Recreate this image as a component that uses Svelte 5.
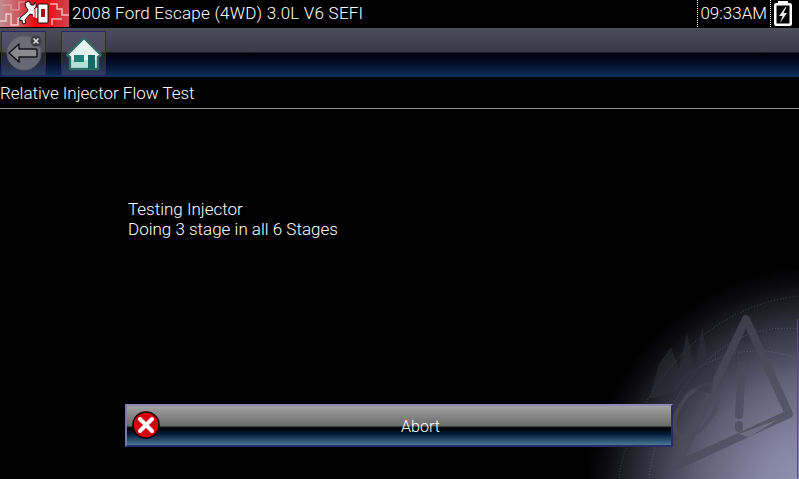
<script lang="ts">
	let title = 'Relative Injector Flow Test';
	let vehicle = '2008 Ford Escape (4WD) 3.0L V6 SEFI';
</script>

<div class="screen">
	<header class="status">
		<svg class="logo" viewBox="0 0 69 27" width="69" height="27">
			<defs>
				<linearGradient id="logoBg" x1="0" x2="1" y1="0" y2="0">
					<stop offset="0" stop-color="#c08c8e" />
					<stop offset="0.3" stop-color="#cf5058" />
					<stop offset="0.5" stop-color="#f00812" />
					<stop offset="0.75" stop-color="#e81820" />
					<stop offset="1" stop-color="#c84850" />
				</linearGradient>
			</defs>
			<rect width="69" height="27" fill="url(#logoBg)" />
			<path d="M0 21h6v-7h5v11h7v-7h4" fill="none" stroke="#f0c8ca" stroke-width="1.5" />
			<path d="M2 5h9v5h8V2h6" fill="none" stroke="#e4a4a8" stroke-width="1.2" />
			<path d="M50 4h7v5h5v6h7M52 25v-6h10" fill="none" stroke="#f5b5b8" stroke-width="1.5" />
			<g transform="translate(5 0)">
				<path d="M24 1l2 4 3 0 1-3 1 1 0 4-3 3 1 3-1 2-3-1-5 6 1 3-3 1-1-4-2 1 0-3 7-6 1-2-2-3-1-4z" fill="#fff" stroke="#000" stroke-width="0.9" stroke-linejoin="round" />
			</g>
			<rect x="33" y="9" width="1.5" height="8" fill="#fff" />
			<rect x="35.5" y="8" width="2" height="10" fill="#fff" />
			<rect x="38" y="4" width="10" height="19" rx="1" fill="#fff" stroke="#000" stroke-width="0.9" />
			<rect x="41" y="9" width="4" height="8" fill="#a01018" />
		</svg>
		<span class="vehicle">{vehicle}</span>
		<span class="clock">09:33AM</span>
		<svg class="battery" viewBox="0 0 18 25" width="18" height="25">
			<rect x="4" y="0" width="10" height="4" fill="#fff" />
			<rect x="1.25" y="3.25" width="15.5" height="20.5" rx="1" fill="#000" stroke="#fff" stroke-width="2.5" />
			<path d="M11.5 6L5 15h3.5L6 22l7-10h-3.5L12.5 6z" fill="#e8e8e8" />
		</svg>
	</header>

	<nav class="toolbar">
		<button class="tool" aria-label="Back">
			<svg viewBox="0 0 42 42" width="42" height="42">
				<circle cx="21" cy="20" r="17" fill="#72727c" fill-opacity="0.85" stroke="#5c5c66" />
				<path d="M6 20l10-9v5h17a1 1 0 0 1 1 1v6a1 1 0 0 1-1 1H16v5z" fill="#8b8b8f" stroke="#14141c" stroke-width="1.5" stroke-linejoin="round" />
				<circle cx="33" cy="8" r="5.5" fill="#3a3a42" />
				<path d="M30.5 5.5l5 5M35.5 5.5l-5 5" stroke="#ddd" stroke-width="1.6" />
			</svg>
		</button>
		<button class="tool home" aria-label="Home">
			<svg viewBox="0 0 42 42" width="42" height="42">
				<path d="M21 5L4 22l3 2v12h28V24l3-2z" fill="#e4f2ee" stroke="#2f6a65" stroke-width="2.4" stroke-linejoin="round" />
				<path d="M8 27h26v8H8z" fill="#8fd0c4" fill-opacity="0.6" />
				<rect x="11" y="22" width="10" height="7" fill="#1f7f78" />
				<rect x="25" y="22" width="7" height="14" fill="#176a64" />
			</svg>
		</button>
	</nav>

	<h1 class="title">{title}</h1>

	<main class="content">
		<svg class="globe" viewBox="0 0 210 210" width="210" height="210" aria-hidden="true">
			<defs>
				<radialGradient id="globeFill" gradientUnits="userSpaceOnUse" cx="235" cy="235" r="240">
					<stop offset="0" stop-color="#9a9abc" />
					<stop offset="0.3" stop-color="#8484a2" />
					<stop offset="0.55" stop-color="#5e5e74" />
					<stop offset="0.78" stop-color="#2c2c38" />
					<stop offset="0.92" stop-color="#0c0c10" />
					<stop offset="1" stop-color="#000" />
				</radialGradient>
			</defs>
			<rect width="210" height="210" fill="url(#globeFill)" />
			<g fill="none" stroke="#a0a0b4" stroke-opacity="0.3" stroke-dasharray="1 2">
				<path d="M30 209C40 140 100 40 209 27" />
				<path d="M60 209C70 130 130 50 209 60" />
				<path d="M85 120C110 90 160 70 209 90" />
			</g>
			<g fill="none" stroke="#4a4a5a" stroke-opacity="0.7" stroke-linejoin="round" stroke-linecap="round">
				<path d="M157 50L200 145L87 197z" stroke-width="8" />
				<path d="M153 96L150 146" stroke-width="8" />
				<path d="M150 156v3" stroke-width="8" />
				<ellipse cx="107" cy="142" rx="16" ry="30" transform="rotate(35 107 142)" stroke-width="4" />
			</g>
			<path d="M60 130L70 95 82 78 90 100 98 64 106 100 113 58 120 95 128 90 122 125 100 118 80 125z" fill="#333340" fill-opacity="0.45" />
			<path d="M150 165l40-15-30 18z" fill="#a8a8c4" fill-opacity="0.3" />
			<path d="M208.5 50V209" stroke="#5e5a20" stroke-width="1" />
		</svg>
		<div class="message">
			<p>Testing Injector</p>
			<p>Doing 3 stage in all 6 Stages</p>
		</div>
		<button class="abort">
			<svg class="abort-icon" viewBox="0 0 30 30" width="30" height="30">
				<circle cx="15" cy="15" r="13" fill="#d8000f" stroke="#1a0004" stroke-width="1.6" />
				<path d="M9 9l12 12M21 9L9 21" stroke="#fff" stroke-width="4" stroke-linecap="round" />
			</svg>
			<span>Abort</span>
		</button>
	</main>
</div>

<style>
	:global(body) {
		background: #000;
	}
	.screen {
		width: 799px;
		height: 479px;
		display: flex;
		flex-direction: column;
		overflow: hidden;
		background: #000;
		color: #fff;
		font-family: Roboto, 'Liberation Sans', sans-serif;
		font-weight: 300;
		font-size: 17px;
	}
	.status {
		height: 28px;
		flex: none;
		display: flex;
		align-items: flex-start;
	}
	.logo {
		flex: none;
	}
	.vehicle {
		margin-left: 3px;
		line-height: 26px;
		letter-spacing: 0.23px;
	}
	.clock {
		margin-left: auto;
		height: 27px;
		line-height: 27px;
		padding: 0 3px 0 2px;
		border-left: 1px dotted #fff;
		border-right: 1px dotted #fff;
	}
	.battery {
		margin: 1px 7px 0 3px;
		flex: none;
	}
	.toolbar {
		height: 49px;
		flex: none;
		display: flex;
		gap: 15px;
		padding: 3px 0 0 1px;
		box-sizing: border-box;
		background: linear-gradient(
			#4c4c5a 0,
			#393a47 49%,
			#000008 51%,
			#03102c 75%,
			#10315e 100%
		);
	}
	.tool {
		width: 45px;
		height: 45px;
		padding: 0;
		border: 1px solid #2a2568;
		background: rgba(110, 108, 135, 0.32);
		display: flex;
		align-items: center;
		justify-content: center;
	}
	.title {
		margin: 0;
		height: 32px;
		flex: none;
		box-sizing: border-box;
		border-bottom: 1px solid #8c8c8c;
		font-size: 17px;
		font-weight: 300;
		line-height: 33px;
	}
	.content {
		position: relative;
		flex: 1;
		padding: 90px 126px 0 128px;
		display: flex;
		flex-direction: column;
	}
	.globe {
		position: absolute;
		right: 0;
		bottom: 0;
	}
	.message {
		position: relative;
		line-height: 20px;
	}
	.message p {
		margin: 0;
	}
	.abort {
		position: relative;
		margin: 165px 0 0 -3px;
		height: 43px;
		padding: 2px 0 0 43px;
		box-sizing: border-box;
		border: 2px solid #2a2a68;
		border-top-color: #8f88b8;
		border-left-color: #7d76aa;
		color: #fff;
		font: inherit;
		font-size: 16px;
		background: linear-gradient(
			#a2a2a2 0,
			#6c6c6c 50%,
			#000 56%,
			#031a38 72%,
			#4a7896 100%
		);
		display: flex;
		align-items: center;
		justify-content: center;
	}
	.abort-icon {
		position: absolute;
		left: 4px;
		top: 4px;
	}
</style>
